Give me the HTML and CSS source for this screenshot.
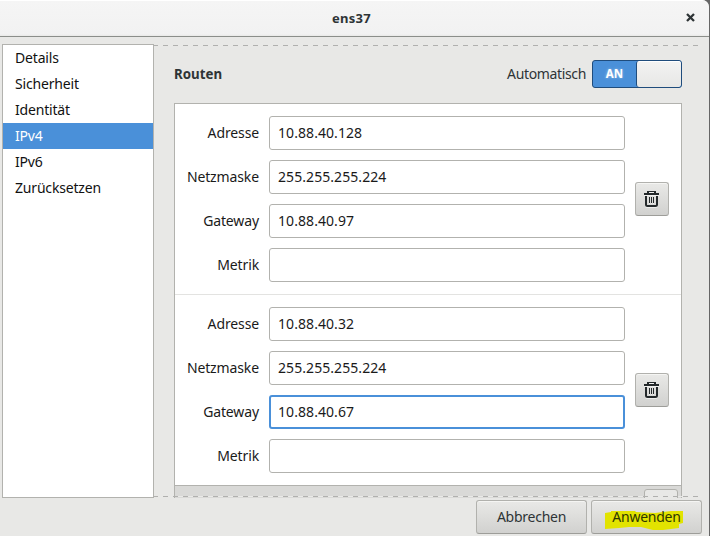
FILE: index.html
```html
<!DOCTYPE html>
<html lang="de">
<head>
<meta charset="utf-8">
<title>ens37</title>
<link rel="stylesheet" href="styles.css">
</head>
<body>
<div class="window">
  <header class="titlebar">
    <h1>ens37</h1>
    <button class="close" aria-label="Schließen"><svg width="9" height="9" viewBox="0 0 9 9"><path d="M1 1L8 8M8 1L1 8"/></svg></button>
  </header>
  <main class="content">
    <nav class="sidebar">
      <a>Details</a><a>Sicherheit</a><a>Identität</a><a class="selected">IPv4</a><a>IPv6</a><a class="reset">Zurücksetzen</a>
    </nav>
    <section class="viewport">
      <div class="heading">
        <h2>Routen</h2>
        <span class="auto">Automatisch</span>
        <div class="switch"><span class="on">AN</span><span class="knob"></span></div>
      </div>
      <div class="routes">
        <div class="route">
          <div class="fields">
            <label class="adr">Adresse</label><div class="entry">10.88.40.128</div>
            <label class="net">Netzmaske</label><div class="entry">255.255.255.224</div>
            <label class="gw">Gateway</label><div class="entry">10.88.40.97</div>
            <label class="met">Metrik</label><div class="entry"></div>
          </div>
          <button class="trash" aria-label="Löschen"><svg width="15" height="16" viewBox="0 0 15 16"><path class="ink" d="M3 0H12V2H15V4H0V2H3ZM5 1V2H10V1Z" fill-rule="evenodd"/><path class="can" d="M2 5V13.5Q2 15 3.5 15H11.5Q13 15 13 13.5V5"/><path class="bars" d="M5.5 6V12M7.5 6V12M9.5 6V12"/></svg></button>
        </div>
        <div class="route">
          <div class="fields">
            <label class="adr">Adresse</label><div class="entry">10.88.40.32</div>
            <label class="net">Netzmaske</label><div class="entry">255.255.255.224</div>
            <label class="gw">Gateway</label><div class="entry focused">10.88.40.67</div>
            <label class="met">Metrik</label><div class="entry"></div>
          </div>
          <button class="trash" aria-label="Löschen"><svg width="15" height="16" viewBox="0 0 15 16"><path class="ink" d="M3 0H12V2H15V4H0V2H3ZM5 1V2H10V1Z" fill-rule="evenodd"/><path class="can" d="M2 5V13.5Q2 15 3.5 15H11.5Q13 15 13 13.5V5"/><path class="bars" d="M5.5 6V12M7.5 6V12M9.5 6V12"/></svg></button>
        </div>
        <div class="toolbar"><span class="add"></span></div>
      </div>
    </section>
  </main>
  <footer class="actions">
    <button class="action"><span class="cancel">Abbrechen</span></button>
    <button class="action"><svg class="marker" width="79" height="21" viewBox="0 0 79 21"><path d="M0 3L6 2V1H30L31 2L50 3L66 1H78V13L74 14V18L58 20H48L36 17H24L14 18L0 19Z"/></svg><span class="apply">Anwenden</span></button>
  </footer>
</div>
</body>
</html>
```

FILE: styles.css
```css
* { box-sizing: border-box; }
body {
  margin: 0;
  height: 536px;
  overflow: hidden;
  background: #666;
  font: 14px/20px "Noto Sans", sans-serif;
  color: #1a1a1a;
}
button { padding: 0; font: inherit; color: inherit; }
h1, h2 { margin: 0; font-size: 14px; color: #2e3436; }
.window {
  width: 709px;
  height: 536px;
  overflow: hidden;
  background: #e8e8e6;
  border-radius: 0 7px 0 0;
}
.titlebar {
  position: relative;
  height: 37px;
  display: flex;
  align-items: center;
  justify-content: center;
  background: linear-gradient(#f5f5f5, #f2f2f2 33px, #e4e4e1 36px);
  border-top: 1px solid #fff;
  border-bottom: 1px solid #8b8e8a;
}
.titlebar h1 { font-size: 13px; line-height: 18px; letter-spacing: 0.3px; margin: 0 6px 2px 0; }
.close {
  position: absolute;
  right: 14px;
  top: 12px;
  width: 9px;
  height: 9px;
  display: flex;
  border: 0;
  background: none;
}
.close path { stroke: #2e3436; stroke-width: 2.3; }
.content { display: flex; padding: 7px 7px 0 2px; height: 461px; }
.sidebar {
  width: 152px;
  height: 454px;
  background: #fff;
  border: 1px solid #b2b2ae;
}
.sidebar a { display: block; height: 26px; padding-left: 12px; line-height: 26px; letter-spacing: -0.18px; color: #111; }
.sidebar .selected { background: #4a90d9; color: #fff; }
.viewport { position: relative; flex: 1; height: 454px; padding: 16px 20px 0; overflow: hidden; }
.viewport::before, .viewport::after {
  content: "";
  position: absolute;
  z-index: 1;
  left: 0;
  right: 0;
  height: 1px;
  background: repeating-linear-gradient(90deg, #b0b0ae 0 4px, #e9e9e7 4px 9px, #b0b0ae 9px 10px);
}
.viewport::before { top: 1px; }
.viewport::after { bottom: 1px; }
.heading { display: flex; align-items: center; height: 28px; color: #2e3436; }
.heading h2 { margin-right: auto; font-size: 13.3px; }
.auto { margin-right: 6px; letter-spacing: -0.35px; }
.switch {
  display: flex;
  width: 90px;
  height: 28px;
  border: 1px solid #1f4c7c;
  border-radius: 3px;
  background: #4a90d9;
  overflow: hidden;
}
.on {
  width: 43px;
  text-align: center;
  font-size: 11.5px;
  font-weight: bold;
  line-height: 26px;
  color: #fff;
  text-shadow: 0 0 3px #cfe3f799;
}
.knob {
  flex: 1;
  background: linear-gradient(#f3f3f2, #e7e7e5);
  border-left: 1px solid #1f4c7c;
  border-radius: 3px 2px 2px 3px;
  box-shadow: inset 0 1px #fff;
}
.routes { width: 508px; margin-top: 15px; border: 1px solid #b2b2ae; border-bottom: 0; background: #fff; }
.route { display: flex; align-items: center; height: 191px; padding: 0 12px; border-bottom: 1px solid #e3e3e1; }
.route + .route { height: 190px; border-bottom: 0; }
.fields { display: grid; grid-template-columns: 72px 356px; grid-auto-rows: 34px; gap: 10px; }
.fields label { justify-self: end; line-height: 34px; letter-spacing: -0.12px; }
.entry {
  border: 1px solid #b2b2ae;
  border-radius: 3px;
  background: #fff;
  padding-left: 8px;
  line-height: 32px;
  letter-spacing: 0.07px;
}
.focused { border: 2px solid #4a90d9; padding-left: 7px; line-height: 30px; }
.trash {
  display: flex;
  align-items: center;
  justify-content: center;
  width: 34px;
  height: 34px;
  margin-left: 10px;
  padding-right: 1px;
  border: 1px solid #b1b1ad;
  border-bottom-color: #9d9d99;
  border-radius: 3px;
  background: linear-gradient(#e9e9e7, #d1d1cf);
  box-shadow: inset 0 1px #f5f5f3;
}
.trash svg { overflow: visible; filter: drop-shadow(0 1px #fff8); }
.ink { fill: #24292b; }
.can { fill: none; stroke: #24292b; stroke-width: 2; }
.bars { fill: none; stroke: #24292b; }
.toolbar { display: flex; height: 30px; padding: 3px 3px 0; justify-content: flex-end; background: #d9d9d7; border-top: 1px solid #b2b2ae; }
.add { width: 34px; border: 1px solid #b2b2ae; border-radius: 3px; background: #e8e8e6; }
.actions { display: flex; justify-content: flex-end; gap: 4px; padding: 2px 7px 0 0; }
.action {
  position: relative;
  width: 111px;
  height: 34px;
  border: 1px solid #b1b1ad;
  border-bottom-color: #9d9d99;
  border-radius: 3px;
  background: linear-gradient(#e9e9e7, #d1d1cf);
  box-shadow: inset 0 1px #f5f5f3;
  color: #2e3436;
}
.action span { position: relative; letter-spacing: -0.25px; }
.marker { position: absolute; left: 13px; top: 9px; }
.marker path { fill: #e2e300; }
.apply { color: #2e3600; }
```
